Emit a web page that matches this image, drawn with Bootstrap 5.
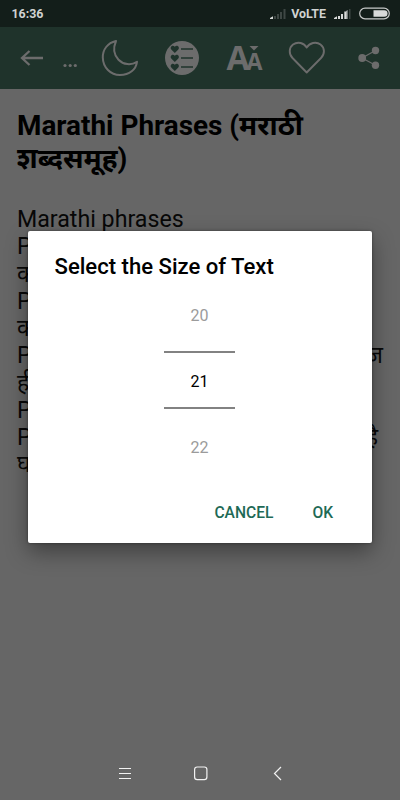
<!DOCTYPE html>
<html lang="mr">
<head>
<meta charset="utf-8">
<meta name="viewport" content="width=device-width, initial-scale=1">
<title>Marathi Phrases</title>
<link rel="stylesheet" href="https://cdn.jsdelivr.net/npm/bootstrap@5.3.0/dist/css/bootstrap.min.css">
<style>
body{font-family:Roboto,"Noto Sans",sans-serif;background:#666;color:#000}
.screen{width:400px;height:800px;background:#666}
.status{height:27px;background:#131e1a;color:#d0d2d1;font-size:12.4px;padding:1px 10px 0 11.5px}
.appbar{height:62px;background:#1f332b;color:#6c6c6c}
.appbar svg{display:block}
.article{padding:20px 17px 0}
.article h1{font-size:27.9px;line-height:33px;font-weight:700;margin:0 0 31px;white-space:nowrap}
.line{font-size:23.2px;line-height:27.25px;height:27.25px;white-space:nowrap;color:#080808}
.line .tail{margin-right:5px}
.dialog{left:28px;top:231px;width:344px;height:312px;border-radius:2px;box-shadow:0 9px 22px rgba(0,0,0,.38),0 0 3px rgba(0,0,0,.4)}
.dialog h2{font-size:22.1px;line-height:26px;font-weight:500;margin:0;padding:22px 0 0 26.5px;white-space:nowrap}
.picker{width:71px;margin:23px auto 0;font-size:16px;line-height:20px;position:relative;left:-.5px}
.picker .dim{color:#9b9b9b;height:33px;padding-top:3.5px}
.picker .current{height:58px;border-top:2px solid #828282;border-bottom:2px solid #828282;padding-top:18.5px}
.picker .after{height:60px;padding-top:29px}
.actions{padding:33.5px 39px 0 0;gap:39px}
.act{border:0;background:none;padding:0;color:#1e6a56;font-size:15.6px;line-height:20px;font-weight:500}
.sysnav{height:52px;color:#f2f2f2}
</style>
<script src="https://cdn.jsdelivr.net/npm/bootstrap@5.3.0/dist/js/bootstrap.bundle.min.js"></script>
</head>
<body>
<div class="screen position-relative overflow-hidden d-flex flex-column">
  <header>
    <div class="status d-flex align-items-center justify-content-between fw-bold">
      <span>16:36</span>
      <div class="d-flex align-items-center">
        <svg width="18" height="12" viewBox="0 0 18 12"><path d="M1 11v-1l3-1.700V11z" fill="#d8dad9"/><path d="M5 11V8h2v3zM8 11V6h2v5zM11 11V4h2v7zM14.500 11V1h2v10z" fill="#3e4744"/></svg>
        <span class="ms-1 me-2">VoLTE</span>
        <svg width="17" height="12" viewBox="0 0 17 12"><path d="M0 11v-1l3-1.700V11zM4 11V8h2v3zM7 11V6h2v5zM10.300 11V3.500h2V11z" fill="#d8dad9"/><path d="M12.300 3v8h1.200V2z" fill="#d8dad9"/><path d="M15 11V1h1.500v10z" fill="#3e4744"/></svg>
        <svg class="ms-2" width="31" height="13" viewBox="0 0 31 13"><rect x=".7" y="1.200" width="29.600" height="10.600" rx="5.300" fill="none" stroke="#c8cac9" stroke-width="1.200"/><path d="M14.500 3.200h10.700a3.300 3.300 0 0 1 0 6.600H14.500z" fill="#d8dad9"/></svg>
      </div>
    </div>
    <nav class="appbar">
      <svg width="400" height="62" viewBox="0 27 400 62" fill="none" stroke="currentColor">
        <path d="M43 58H22M29.500 51L22 58l7.500 7" stroke-width="2.300"/>
        <g fill="currentColor" stroke="none"><circle cx="65" cy="65.500" r="1.600"/><circle cx="70.200" cy="65.500" r="1.600"/><circle cx="75.300" cy="65.500" r="1.600"/></g>
        <path d="M116 41C107.500 43 102.700 49.500 102.800 57.500C103 67.500 110.500 75 120 75C129.500 75 136 69.500 137 61.800C131 65.500 123.500 64.800 118.500 59.700C113.500 54.500 113 48 116 41Z" stroke-width="2" stroke-linejoin="round"/>
        <circle cx="182" cy="58" r="17" fill="currentColor" stroke="none"/>
        <g fill="#1f332b" stroke="none">
          <path id="hrt" d="M174.800 53l-3.300-3.200c-2.300-2.300.8-5.700 3.300-3.100 2.500-2.600 5.600.8 3.300 3.100z"/>
          <use href="#hrt" y="9"/><use href="#hrt" y="18"/>
        </g>
        <path d="M181 49h12M181 58h12M181 67h12" stroke="#1f332b" stroke-width="1.400"/>
        <g fill="currentColor" stroke="none">
          <text x="226.500" y="70" font-family="Open Sans, sans-serif" font-weight="700" font-size="34" textLength="23" lengthAdjust="spacingAndGlyphs">A</text>
          <text x="246.500" y="70" font-family="Open Sans, sans-serif" font-weight="700" font-size="24" textLength="16" lengthAdjust="spacingAndGlyphs">A</text>
          <path d="M249.500 46h9l-4.500 4.500z"/>
        </g>
        <path d="M306.700 72.500L292.500 58C288.500 54 289 47.500 293 44.500C298 41 304 43 306.700 47.500C309.500 43 316 41 320.500 44.500C325 48 325 54 321 58Z" stroke-width="1.900" stroke-linejoin="round"/>
        <path d="M375.500 50.500L362 58l13.500 7.200" stroke-width="1.200"/>
        <g fill="currentColor" stroke="none"><circle cx="375.500" cy="50.500" r="3.700"/><circle cx="362.200" cy="58" r="3.900"/><circle cx="375.500" cy="65.300" r="3.700"/></g>
      </svg>
    </nav>
  </header>
  <main class="article flex-grow-1">
    <h1>Marathi Phrases (मराठी<br>शब्दसमूह)</h1>
    <div class="line">Marathi phrases</div>
    <div class="line">P</div>
    <div class="line">क</div>
    <div class="line">P</div>
    <div class="line">क</div>
    <div class="line d-flex justify-content-between"><span>P</span><span>ज</span></div>
    <div class="line">ही</div>
    <div class="line">P</div>
    <div class="line d-flex justify-content-between"><span>P</span><span class="tail">है</span></div>
    <div class="line">घ</div>
  </main>
  <footer class="sysnav">
    <svg class="d-block" width="400" height="52" viewBox="0 748 400 52" fill="none" stroke="currentColor" stroke-width="1.200"><path d="M119 768.500h12M119 773.500h12M119 778.500h12"/><rect x="194.600" y="767" width="12.300" height="12.700" rx="2.600"/><path d="M281 767l-6.500 6.500 6.500 6.500"/></svg>
  </footer>
  <section class="dialog position-absolute bg-white" role="dialog" aria-label="Select the Size of Text">
    <h2>Select the Size of Text</h2>
    <div class="picker text-center">
      <div class="dim">20</div>
      <div class="current mt-3">21</div>
      <div class="dim after">22</div>
    </div>
    <div class="actions d-flex justify-content-end">
      <button type="button" class="act">CANCEL</button>
      <button type="button" class="act">OK</button>
    </div>
  </section>
</div>
</body>
</html>
